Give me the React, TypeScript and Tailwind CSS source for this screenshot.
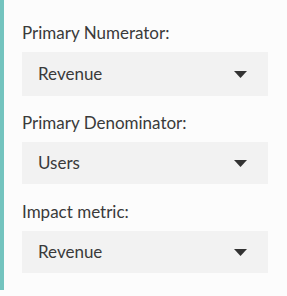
import React from "react";

function Caret() {
  return (
    <svg width="13" height="7" viewBox="0 0 13 7" className="shrink-0">
      <path d="M0 0 L13 0 L6.5 7 Z" fill="#333333" />
    </svg>
  );
}

function Select({ value, h, className = "" }: { value: string; h: string; className?: string }) {
  return (
    <div
      className={`flex items-center justify-between bg-[#f2f2f2] pl-4 pr-[21px] text-[17px] text-[#3a3a3a] ${h} ${className}`}
    >
      <span>{value}</span>
      <Caret />
    </div>
  );
}

export default function App() {
  return (
    <div className="w-[287px] h-[296px] bg-[#fcfcfc]" style={{ fontFamily: "Lato, 'Noto Sans', sans-serif" }}>
      <div className="h-[290px] border-l-4 border-[#74c4bf] pl-[18px] pr-[19px] pt-[21px] flex flex-col">
        <div className="text-[17px] leading-[24px] text-[#3a3a3a]">Primary Numerator:</div>
        <Select value="Revenue" h="h-[44px]" className="mt-[7px]" />
        <div className="mt-[15px] text-[17px] leading-[24px] text-[#3a3a3a]">Primary Denominator:</div>
        <Select value="Users" h="h-[42px]" className="mt-[7px]" />
        <div className="mt-[16px] text-[17px] leading-[24px] text-[#3a3a3a]">Impact metric:</div>
        <Select value="Revenue" h="h-[42px]" className="mt-[7px]" />
      </div>
    </div>
  );
}
